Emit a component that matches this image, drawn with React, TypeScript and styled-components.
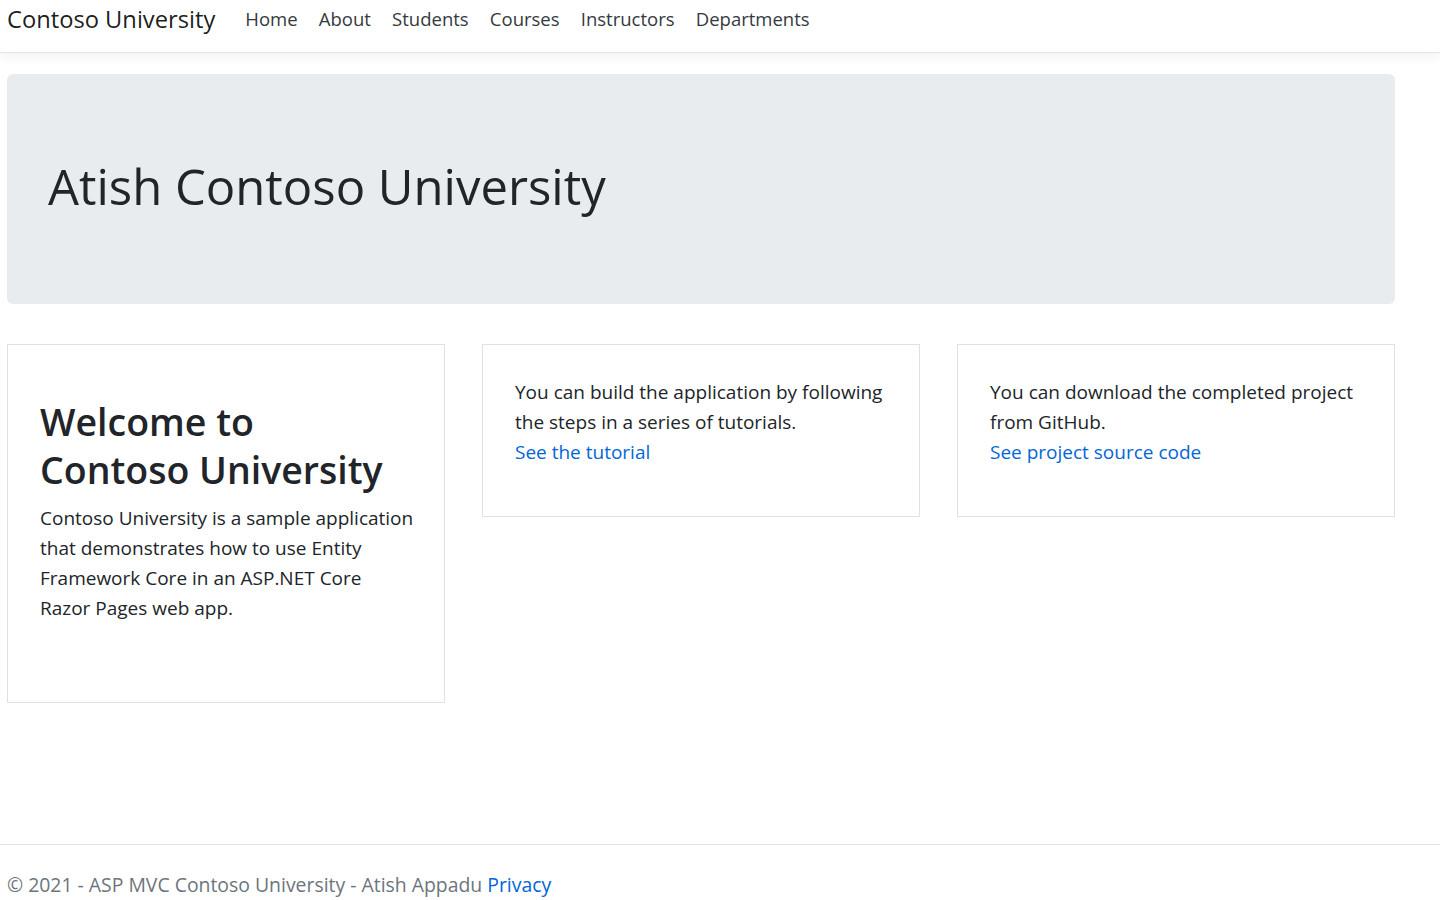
import React from "react";
import styled, { createGlobalStyle } from "styled-components";

const GlobalStyle = createGlobalStyle`
  html, body {
    margin: 0;
    padding: 0;
  }
  body {
    font-family: "Open Sans", "Noto Sans", "Liberation Sans", sans-serif;
    color: #212529;
    background: #ffffff;
    -webkit-font-smoothing: antialiased;
  }
  *, *::before, *::after { box-sizing: border-box; }
`;

const Page = styled.div`
  min-height: 100vh;
  display: flex;
  flex-direction: column;
`;

const Navbar = styled.header`
  height: 53px;
  display: flex;
  align-items: flex-start;
  padding: 1px 0 0 7px;
  background: #ffffff;
  border-bottom: 1px solid #e3e3e3;
  box-shadow: 0 4px 12px rgba(0, 0, 0, 0.05);
`;

const Brand = styled.a`
  font-size: 23.7px;
  line-height: 36px;
  color: rgba(0, 0, 0, 0.9);
  text-decoration: none;
  margin-right: 19.5px;
  white-space: nowrap;
`;

const NavList = styled.nav`
  display: flex;
  align-items: flex-start;
`;

const NavLink = styled.a`
  font-size: 18.5px;
  line-height: 27px;
  padding: 4px 10.6px 0;
  color: #343a40;
  text-decoration: none;
  white-space: nowrap;
`;

const Main = styled.main`
  padding: 21px 45px 0 7px;
`;

const Jumbotron = styled.section`
  background: #e9ecef;
  border-radius: 6px;
  padding: 82px 41px 88px;
`;

const Display = styled.h1`
  margin: 0;
  font-size: 49px;
  line-height: 60px;
  font-weight: 400;
  color: #212529;
`;

const CardRow = styled.div`
  margin-top: 40px;
  display: grid;
  grid-template-columns: repeat(3, minmax(0, 1fr));
  column-gap: 37px;
  align-items: start;
`;

const Card = styled.div`
  border: 1px solid #dee2e6;
  padding: 32px;
`;

const CardTitle = styled.h2`
  margin: 21px 0 9px;
  font-size: 37.5px;
  line-height: 48px;
  font-weight: 600;
  color: #212529;
`;

const Lead = styled.p<{ $bottom: number; $nowrap?: boolean }>`
  margin: 0 0 ${(p) => p.$bottom}px;
  font-size: 19px;
  line-height: 30px;
  color: #212529;
  white-space: ${(p) => (p.$nowrap ? "nowrap" : "normal")};
`;

const Link = styled.a`
  color: #0366d6;
  text-decoration: none;
`;

const Footer = styled.footer`
  margin-top: auto;
  height: 56px;
  border-top: 1px solid #e3e3e3;
  padding: 25px 0 0 7px;
  font-size: 19.4px;
  line-height: 30px;
  color: #6c757d;
  white-space: nowrap;
`;

const links = ["Home", "About", "Students", "Courses", "Instructors", "Departments"];

export default function App() {
  return (
    <>
      <GlobalStyle />
      <Page>
        <Navbar>
          <Brand href="#">Contoso University</Brand>
          <NavList>
            {links.map((l) => (
              <NavLink key={l} href="#">
                {l}
              </NavLink>
            ))}
          </NavList>
        </Navbar>
        <Main>
          <Jumbotron>
            <Display>Atish Contoso University</Display>
          </Jumbotron>
          <CardRow>
            <Card>
              <CardTitle>
                Welcome to
                <br />
                Contoso University
              </CardTitle>
              <Lead $bottom={47} $nowrap>
                Contoso University is a sample application
                <br />
                that demonstrates how to use Entity
                <br />
                Framework Core in an ASP.NET Core
                <br />
                Razor Pages web app.
              </Lead>
            </Card>
            <Card>
              <Lead $bottom={17}>
                You can build the application by following the steps in a series of tutorials.
                <br />
                <Link href="#">See the tutorial</Link>
              </Lead>
            </Card>
            <Card>
              <Lead $bottom={17}>
                You can download the completed project from GitHub.
                <br />
                <Link href="#">See project source code</Link>
              </Lead>
            </Card>
          </CardRow>
        </Main>
        <Footer>
          © 2021 - ASP MVC Contoso University - Atish Appadu <Link href="#">Privacy</Link>
        </Footer>
      </Page>
    </>
  );
}
